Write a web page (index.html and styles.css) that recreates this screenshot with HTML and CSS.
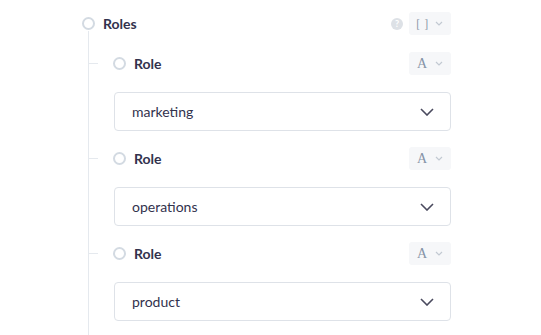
FILE: index.html
```html
<!DOCTYPE html>
<html lang="en">

<head>
    <meta charset="UTF-8">
    <meta name="viewport" content="width=device-width, initial-scale=1.0">
    <title>Roles</title>
    <link rel="stylesheet" href="styles.css">
</head>

<body>
    <div class="tree">
        <!-- 根節點 -->
        <div class="row">
            <span class="dot"></span>
            <span class="label">Roles</span>
            <span class="help">?</span>
            <button class="type-btn" type="button">
                <span class="type-icon">[ ]</span>
                <svg class="caret" viewBox="0 0 8 5" width="8" height="5"><path d="M1 1l3 3 3-3" /></svg>
            </button>
        </div>
        <!-- 子節點 -->
        <div class="children">
            <div class="item">
                <div class="row child-row">
                    <span class="dot"></span>
                    <span class="label">Role</span>
                    <button class="type-btn" type="button">
                        <span class="type-icon serif">A</span>
                        <svg class="caret" viewBox="0 0 8 5" width="8" height="5"><path d="M1 1l3 3 3-3" /></svg>
                    </button>
                </div>
                <div class="select">
                    <span>marketing</span>
                    <svg class="chevron" viewBox="0 0 14 8" width="14" height="8"><path d="M1 1l6 6 6-6" /></svg>
                </div>
            </div>
            <div class="item">
                <div class="row child-row">
                    <span class="dot"></span>
                    <span class="label">Role</span>
                    <button class="type-btn" type="button">
                        <span class="type-icon serif">A</span>
                        <svg class="caret" viewBox="0 0 8 5" width="8" height="5"><path d="M1 1l3 3 3-3" /></svg>
                    </button>
                </div>
                <div class="select">
                    <span>operations</span>
                    <svg class="chevron" viewBox="0 0 14 8" width="14" height="8"><path d="M1 1l6 6 6-6" /></svg>
                </div>
            </div>
            <div class="item">
                <div class="row child-row">
                    <span class="dot"></span>
                    <span class="label">Role</span>
                    <button class="type-btn" type="button">
                        <span class="type-icon serif">A</span>
                        <svg class="caret" viewBox="0 0 8 5" width="8" height="5"><path d="M1 1l3 3 3-3" /></svg>
                    </button>
                </div>
                <div class="select">
                    <span>product</span>
                    <svg class="chevron" viewBox="0 0 14 8" width="14" height="8"><path d="M1 1l6 6 6-6" /></svg>
                </div>
            </div>
        </div>
    </div>
</body>

</html>
```

FILE: styles.css
```css
* {
    margin: 0;
    padding: 0;
    box-sizing: border-box;
}

html,
body {
    height: 335px;
    overflow: hidden;
}

body {
    font-family: Lato, "Open Sans", sans-serif;
    color: #32324d;
    background-color: #fff;
}

.tree {
    height: 100%;
    display: flex;
    flex-direction: column;
    padding: 12px 90px 0 82px;
}

.row {
    height: 23px;
    display: flex;
    align-items: center;
    position: relative;
    flex-shrink: 0;
}

.dot {
    width: 13px;
    height: 13px;
    border: 2px solid #d3dae2;
    border-radius: 50%;
    flex-shrink: 0;
}

.label {
    margin-left: 8px;
    font-size: 14px;
    font-weight: bold;
    flex: 1;
}

.help {
    width: 12px;
    height: 12px;
    border-radius: 50%;
    background-color: #dde1e6;
    color: #fff;
    font-size: 9px;
    font-weight: bold;
    display: flex;
    justify-content: center;
    align-items: center;
    margin-right: 6px;
}

.type-btn {
    width: 42px;
    height: 23px;
    border: none;
    border-radius: 3px;
    background-color: #f6f7f9;
    display: flex;
    align-items: center;
    padding-left: 7px;
    gap: 7px;
    font-family: inherit;
}

.type-icon {
    font-size: 12px;
    color: #8a97a8;
    width: 12px;
    letter-spacing: 1px;
    white-space: nowrap;
}

.type-icon.serif {
    font-family: "Liberation Serif", serif;
    font-size: 14px;
    color: #8593a7;
    letter-spacing: 0;
}

.caret {
    fill: none;
    stroke: #c2c9d2;
    stroke-width: 1.2;
}

/* 子節點 */
.children {
    flex: 1;
    margin: -4px 0 0 6px;
    padding: 21px 0 0 25px;
    border-left: 1px solid #e5e9ee;
    display: flex;
    flex-direction: column;
    gap: 16px;
}

.item {
    display: flex;
    flex-direction: column;
    gap: 17px;
}

.child-row::before {
    content: "";
    position: absolute;
    left: -25px;
    top: 11px;
    width: 9px;
    height: 1px;
    background-color: #e5e9ee;
}

.child-row .dot {
    margin-left: -1px;
}

.select {
    height: 39px;
    border: 1px solid #dee2e8;
    border-radius: 4px;
    display: flex;
    align-items: center;
    justify-content: space-between;
    padding: 0 16px 0 17px;
    font-size: 14px;
    flex-shrink: 0;
}

.chevron {
    fill: none;
    stroke: #4a4a5e;
    stroke-width: 1.6;
}
```
